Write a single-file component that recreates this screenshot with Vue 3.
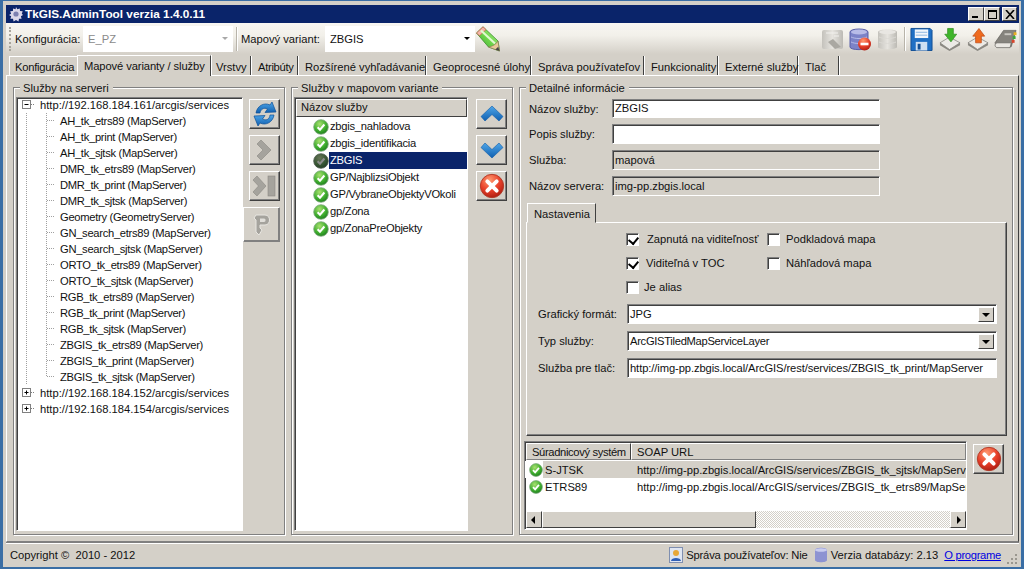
<script setup>
const tabs = [
  { t: 'Konfigurácia', w: 68 }, { t: 'Mapové varianty / služby', w: 134, active: true },
  { t: 'Vrstvy', w: 40 }, { t: 'Atribúty', w: 47 }, { t: 'Rozšírené vyhľadávanie', w: 128 },
  { t: 'Geoprocesné úlohy', w: 105 }, { t: 'Správa používateľov', w: 113 },
  { t: 'Funkcionality', w: 74 }, { t: 'Externé služby', w: 80 }, { t: 'Tlač', w: 41 },
]
const children = ['AH_tk_etrs89 (MapServer)','AH_tk_print (MapServer)','AH_tk_sjtsk (MapServer)','DMR_tk_etrs89 (MapServer)','DMR_tk_print (MapServer)','DMR_tk_sjtsk (MapServer)','Geometry (GeometryServer)','GN_search_etrs89 (MapServer)','GN_search_sjtsk (MapServer)','ORTO_tk_etrs89 (MapServer)','ORTO_tk_sjtsk (MapServer)','RGB_tk_etrs89 (MapServer)','RGB_tk_print (MapServer)','RGB_tk_sjtsk (MapServer)','ZBGIS_tk_etrs89 (MapServer)','ZBGIS_tk_print (MapServer)','ZBGIS_tk_sjtsk (MapServer)']
const services = ['zbgis_nahladova','zbgis_identifikacia','ZBGIS','GP/NajblizsiObjekt','GP/VybraneObjektyVOkoli','gp/Zona','gp/ZonaPreObjekty']
</script>

<template>
  <div class="window">
    <svg class="defs" width="0" height="0">
      <defs>
        <radialGradient id="gGreen" cx="40%" cy="30%" r="75%"><stop offset="0" stop-color="#a8e070"/><stop offset=".6" stop-color="#3fae2f"/><stop offset="1" stop-color="#1c7a1c"/></radialGradient>
        <radialGradient id="gRed" cx="40%" cy="25%" r="80%"><stop offset="0" stop-color="#ff9a70"/><stop offset=".55" stop-color="#e8402a"/><stop offset="1" stop-color="#a81a10"/></radialGradient>
        <linearGradient id="gBlue" x1="0" y1="0" x2="0" y2="1"><stop offset="0" stop-color="#4fa6e8"/><stop offset="1" stop-color="#0f5fb0"/></linearGradient>
        <linearGradient id="gGrey" x1="0" y1="0" x2="1" y2="0"><stop offset="0" stop-color="#c4c2bc"/><stop offset=".5" stop-color="#e6e4df"/><stop offset="1" stop-color="#bcbab4"/></linearGradient>
        <linearGradient id="gPen" x1="0" y1="1" x2="1" y2="0"><stop offset="0" stop-color="#2f9a2a"/><stop offset=".5" stop-color="#6fd64c"/><stop offset="1" stop-color="#b8f090"/></linearGradient>
        <symbol id="ok" viewBox="0 0 16 16"><circle cx="8" cy="8" r="7.300" fill="url(#gGreen)" stroke="#7fa87f" stroke-width=".8"/><path d="M4.600 8.200l2.400 2.500 4.400-5.200" fill="none" stroke="#fff" stroke-width="2"/></symbol>
        <symbol id="no" viewBox="0 0 30 30"><circle cx="15" cy="15" r="12.500" fill="url(#gRed)" stroke="#b03a28"/><path d="M10 10l10 10M20 10L10 20" stroke="#fff" stroke-width="4.200" stroke-linecap="round"/></symbol>
      </defs>
    </svg>

    <header class="title">
      <svg class="app-ic" width="16" height="16" viewBox="0 0 16 16"><path d="M8 1l1.300 2.300 2.500-.9.2 2.700 2.700.2-.9 2.500L15 9l-2.100 1.200.7 2.500-2.600.1-.5 2.600L8 14l-2.400 1.400-.6-2.600-2.600-.1.800-2.500L1 9l2.100-1.200-.9-2.500 2.700-.2.2-2.700 2.500.9z" fill="#dcd8ea"/><circle cx="8" cy="8" r="2.600" fill="#7d80b0"/></svg>
      <span class="title-text">TkGIS.AdminTool verzia 1.4.0.11</span>
      <div class="win-btns">
        <span class="wb"><i class="min"></i></span><span class="wb"><i class="max"></i></span><span class="wb close">
          <svg width="10" height="9" viewBox="0 0 10 9"><path d="M1 0l8 9M9 0L1 9" stroke="#000" stroke-width="1.600"/></svg></span>
      </div>
    </header>

    <div class="toolbar">
      <span class="grip"></span>
      <span class="tlabel l1">Konfigurácia:</span>
      <div class="tcombo disabled"><span>E_PZ</span><i class="caret grey"></i></div>
      <span class="tsep"></span>
      <span class="tlabel l2">Mapový variant:</span>
      <div class="tcombo"><span>ZBGIS</span><i class="caret"></i></div>
      <svg class="pencil" width="24" height="26" viewBox="0 0 24 26">
        <path d="M.5 7L7 .8 22 15l1.500 10-11-4z" fill="url(#gPen)" stroke="#3a8f2c" stroke-width=".8"/>
        <path d="M.5 7L7 .8l3 2.800-6.500 6.200z" fill="#f3b4a8" stroke="#c85040" stroke-width=".6"/>
        <path d="M5 4.500L19 17.500" stroke="#e0fad0" stroke-width="2.200"/>
        <path d="M22 15l1.500 10-11-4c4-.5 8-3 9.500-6z" fill="#e8c89a" stroke="#8a7350" stroke-width=".6"/><path d="M23.500 25l-4.200-1.500 3-2.800z" fill="#444"/>
      </svg>
      <div class="spacer"></div>
      <svg class="ti" width="21" height="26" viewBox="0 0 21 26"><rect y="4" width="21" height="19" rx="2" fill="url(#gGrey)"/><path d="M6 16l5-3 8 8-6 2z" fill="#aaa8a2"/><path d="M4 7h12M12 10h5" stroke="#f2f1ee"/></svg>
      <svg class="ti" width="22" height="26" viewBox="0 0 22 26"><path d="M1 6c0-4 18-4 18 0v15c0 3.500-18 3.500-18 0z" fill="#7c83c8" stroke="#5a60a8"/><ellipse cx="10" cy="6" rx="8" ry="2.600" fill="#b8bce8"/><path d="M2 11c4 2 12 2 16 0M2 16c4 2 12 2 16 0" stroke="#b8bce8" fill="none"/><circle cx="15.500" cy="18" r="6.500" fill="url(#gRed)"/><rect x="11.500" y="16.700" width="8" height="2.600" fill="#fff"/></svg>
      <svg class="ti" width="21" height="26" viewBox="0 0 21 26"><path d="M1 6c0-3.500 19-3.500 19 0v15c0 3-19 3-19 0z" fill="url(#gGrey)"/><ellipse cx="10.500" cy="6" rx="8.500" ry="2.200" fill="#e8e6e2"/><path d="M2 11c4 2 13 2 17 0M2 16c4 2 13 2 17 0" stroke="#dcdad5" fill="none"/></svg>
      <span class="tsep right"></span>
      <svg class="ti save" width="23" height="26" viewBox="0 0 24 26"><path d="M1 2h20l2 2v21H1z" fill="#1f6fc4" stroke="#134f94"/><rect x="5" y="3" width="14" height="9" fill="#f2f6fb"/><path d="M6 6h12M6 9h12" stroke="#8ab4e0"/><rect x="6" y="16" width="12" height="9" fill="#cfe0f2"/><rect x="8" y="18" width="3" height="6" fill="#134f94"/></svg>
      <svg class="ti" width="22" height="26" viewBox="0 0 23 26"><path d="M1 17l10-6 11 6-11 7z" fill="#eceae6" stroke="#77756f" stroke-width=".7"/><path d="M1 17v2.500l10 6 11-6V17l-11 7z" fill="#8b8983"/><path d="M9 2h6v6h3.500l-6 8-6.500-8H9z" fill="#3fb52a" stroke="#2a8a1c" stroke-width=".7"/></svg>
      <svg class="ti" width="22" height="26" viewBox="0 0 23 26"><path d="M1 17l10-6 11 6-11 7z" fill="#eceae6" stroke="#77756f" stroke-width=".7"/><path d="M1 17v2.500l10 6 11-6V17l-11 7z" fill="#8b8983"/><path d="M9 17h6v-7h3.500l-6-8L6 10h3z" fill="#ee6a1e" stroke="#b8430e" stroke-width=".7"/></svg>
      <svg class="ti last" width="23" height="26" viewBox="0 0 24 26"><path d="M1 17L10 4h13l-5 17H3z" fill="#85837d" stroke="#5c5a55" stroke-width=".7"/><path d="M3 22c-2.500-1-2.500-4 0-5h15l-1.200 5z" fill="#e9e7e2" stroke="#5c5a55" stroke-width=".7"/><path d="M11 8h7" stroke="#c8c6c0" stroke-width="2"/><rect x="20.500" y="6" width="3" height="3" fill="#e8b020"/><rect x="19.500" y="10" width="3" height="3" fill="#3aa838"/><rect x="18.500" y="14" width="3" height="3" fill="#d8452c"/></svg>
    </div>

    <nav class="tabs">
      <span v-for="tab in tabs" :key="tab.t" class="tab" :class="{ active: tab.active }" :style="{ width: tab.w + 'px' }">{{ tab.t }}</span>
    </nav>

    <main class="page">
      <section class="group g-left">
        <span class="legend">Služby na serveri</span>
        <div class="tree sunken">
          <div class="node root">
            <svg width="19" height="16" viewBox="0 0 19 16" class="tw"><rect x="2.500" y="3.500" width="8" height="8" fill="#fff" stroke="#808080"/><path d="M4.500 7.500h4" stroke="#000"/><path d="M11 7.500h4" stroke="#808080" stroke-dasharray="1 1"/></svg>
            <span>http://192.168.184.161/arcgis/services</span>
          </div>
          <div v-for="(c, i) in children" :key="c" class="node child">
            <svg width="40" height="16" viewBox="0 0 40 16" class="tw"><path d="M6.500 0v16" stroke="#a0a0a0" stroke-dasharray="1 1"/><path :d="i === children.length - 1 ? 'M26.500 0v8' : 'M26.500 0v16'" stroke="#a0a0a0" stroke-dasharray="1 1"/><path d="M27 7.500h8" stroke="#a0a0a0" stroke-dasharray="1 1"/></svg>
            <span>{{ c }}</span>
          </div>
          <div v-for="u in ['152', '154']" :key="u" class="node root">
            <svg width="19" height="16" viewBox="0 0 19 16" class="tw"><rect x="2.500" y="3.500" width="8" height="8" fill="#fff" stroke="#808080"/><path d="M4.500 7.500h4M6.500 5.500v4" stroke="#000"/><path d="M11 7.500h4" stroke="#808080" stroke-dasharray="1 1"/></svg>
            <span>http://192.168.184.{{ u }}/arcgis/services</span>
          </div>
        </div>
        <div class="side side-left">
          <button class="btn">
            <svg width="26" height="26" viewBox="0 0 26 26"><path d="M4 12C5 5 12 1 18 4l2-3 4 10-11 .5 2.500-3.500C12 6 8.500 8.500 8 12z" fill="url(#gBlue)" stroke="#0c4f96" stroke-width=".7"/><path d="M22 14c-1 7-8 11-14 8l-2 3-4-10 11-.5-2.500 3.500c3.500 2 7 .5 7.500-4z" fill="url(#gBlue)" stroke="#0c4f96" stroke-width=".7"/></svg>
          </button>
          <button class="btn"><svg width="22" height="24" viewBox="0 0 22 24"><path d="M7 2l10 10-10 10-4-4 6-6-6-6z" fill="#a5a39d" stroke="#8a8882" stroke-width=".6"/></svg></button>
          <button class="btn"><svg width="26" height="24" viewBox="0 0 26 24"><path d="M5 2l9 10-9 10-4-4 5.500-6L1 6z" fill="#a5a39d" stroke="#8a8882" stroke-width=".6"/><rect x="16" y="2" width="7" height="20" fill="#a5a39d" stroke="#8a8882" stroke-width=".6"/></svg></button>
          <button class="btn ghost"><svg width="24" height="26" viewBox="0 0 24 26"><path d="M6 3h9c6 0 6 10 0 10h-5v3l2 2-3 5-3-3V8L4 6z" fill="#a5a39d" stroke="#e8e6e1" stroke-width="1"/><path d="M10 6.500h4c2 0 2 3.500 0 3.500h-4z" fill="#e0ded9"/></svg></button>
        </div>
      </section>

      <section class="group g-mid">
        <span class="legend">Služby v mapovom variante</span>
        <div class="list sunken">
          <div class="lhead">Názov služby</div>
          <div class="lrows">
            <div v-for="s in services" :key="s" class="lrow" :class="{ sel: s === 'ZBGIS' }">
              <svg class="ok16" width="16" height="16"><use href="#ok" /></svg>
              <span class="ltext">{{ s }}</span>
            </div>
          </div>
        </div>
        <div class="side side-mid">
          <button class="btn"><svg width="24" height="20" viewBox="0 0 24 20"><path d="M12 2l11 10.500-4 4.500-7-6.500L5 17l-4-4.500z" fill="url(#gBlue)" stroke="#0d5aa8" stroke-width=".6"/></svg></button>
          <button class="btn"><svg width="24" height="20" viewBox="0 0 24 20"><path d="M12 18L1 7.500 5 3l7 6.500L19 3l4 4.500z" fill="url(#gBlue)" stroke="#0d5aa8" stroke-width=".6"/></svg></button>
          <button class="btn"><svg width="28" height="28"><use href="#no" /></svg></button>
        </div>
      </section>

      <section class="group g-right">
        <span class="legend">Detailné informácie</span>
        <div class="details">
          <div class="drow"><label>Názov služby:</label><div class="input sunken">ZBGIS</div></div>
          <div class="drow"><label>Popis služby:</label><div class="input sunken"></div></div>
          <div class="drow"><label>Služba:</label><div class="input sunken ro">mapová</div></div>
          <div class="drow"><label>Názov servera:</label><div class="input sunken ro">img-pp.zbgis.local</div></div>
        </div>

        <div class="subtab">Nastavenia</div>
        <div class="subpanel">
          <div class="checks">
            <div class="chk"><i class="box on"></i><span class="c1">Zapnutá na viditeľnosť</span></div>
            <div class="chk"><i class="box"></i><span>Podkladová mapa</span></div>
            <div class="chk"><i class="box on"></i><span class="c1 b">Viditeľná v TOC</span></div>
            <div class="chk"><i class="box"></i><span>Náhľadová mapa</span></div>
            <div class="chk"><i class="box"></i><span class="c1 c">Je alias</span></div>
          </div>
          <div class="frow"><label>Grafický formát:</label><div class="input sunken combo">JPG<span class="drop"></span></div></div>
          <div class="frow"><label>Typ služby:</label><div class="input sunken combo tight">ArcGISTiledMapServiceLayer<span class="drop"></span></div></div>
          <div class="frow"><label>Služba pre tlač:</label><div class="input sunken url">http://img-pp.zbgis.local/ArcGIS/rest/services/ZBGIS_tk_print/MapServer</div></div>
        </div>

        <div class="bottom">
          <div class="grid sunken">
            <div class="ghead"><span class="gh g1">Súradnicový systém</span><span class="gh g2">SOAP URL</span></div>
            <div class="grow selrow"><svg class="ok14" width="14" height="14"><use href="#ok" /></svg><span class="gc1">S-JTSK</span><span class="gc2">http://img-pp.zbgis.local/ArcGIS/services/ZBGIS_tk_sjtsk/MapServer</span></div>
            <div class="grow"><svg class="ok14" width="14" height="14"><use href="#ok" /></svg><span class="gc1">ETRS89</span><span class="gc2">http://img-pp.zbgis.local/ArcGIS/services/ZBGIS_tk_etrs89/MapServer</span></div>
            <div class="gfill"></div>
            <div class="hscroll">
              <span class="sb"><i class="al"></i></span>
              <span class="thumb"></span>
              <span class="track"></span>
              <span class="sb"><i class="ar"></i></span>
            </div>
          </div>
          <button class="btn del"><svg width="28" height="28"><use href="#no" /></svg></button>
        </div>
      </section>
    </main>

    <footer class="status">
      <span>Copyright ©&nbsp; 2010 - 2012</span>
      <div class="spacer"></div>
      <svg width="14" height="16" viewBox="0 0 14 16" class="st-ic"><rect x=".5" y=".5" width="13" height="15" fill="#dfe6f2" stroke="#7f8fb0"/><circle cx="7" cy="6" r="3" fill="#e8a838"/><path d="M2 14c0-4 10-4 10 0z" fill="#2f60b8"/></svg>
      <span class="st1">Správa používateľov: Nie</span>
      <svg width="14" height="16" viewBox="0 0 14 16" class="st-ic two"><path d="M1 3c0-3 12-3 12 0v10c0 3-12 3-12 0z" fill="#8d93d2"/><ellipse cx="7" cy="3" rx="6" ry="1.800" fill="#c9cdef"/></svg>
      <span class="st2">Verzia databázy: 2.13</span>
      <a class="link">O programe</a>
      <svg class="gripper" width="10" height="12" viewBox="0 0 10 12"><path d="M8 2h2v2H8zM4 6h2v2H4zM8 6h2v2H8zM0 10h2v2H0zM4 10h2v2H4zM8 10h2v2H8z" fill="#9a978f"/></svg>
    </footer>
  </div>
</template>

<style>
html, body { margin: 0; padding: 0; background: #d4d0c8; }
</style>

<style scoped>
* { box-sizing: border-box; }
.defs { position: absolute; }
.window {
  width: 1024px; height: 569px; overflow: hidden; display: flex; flex-direction: column;
  font: 11.2px/14px "Liberation Sans", Arial, sans-serif; color: #111;
  background: #d4d0c8; border: solid #3a6ea5; border-width: 1px 3px 2px 3px;
  box-shadow: inset 0 0 0 1px #d4d0c8; padding: 4px 2px 0 3px;
}
.title { height: 18px; background: #0a246a; color: #fff; display: flex; align-items: center; padding: 0 2px 0 2px; flex: none; }
.app-ic { margin-right: 1px; }
.title-text { font-weight: 700; font-size: 11.8px; }
.win-btns { margin-left: auto; display: flex; }
.wb { width: 16px; height: 14px; background: #d4d0c8; border: 1px solid; border-color: #fff #404040 #404040 #fff; position: relative; display: flex; align-items: center; justify-content: center; }
.wb.close { margin-left: 2px; width: 15px; }
.min { width: 6px; height: 2px; background: #000; margin-top: 6px; margin-right: 3px; }
.max { width: 9px; height: 9px; border: 1px solid #000; border-top-width: 2px; }

.toolbar { height: 31px; flex: none; display: flex; align-items: center; background: linear-gradient(#f8f6f2, #f2f0ea 40%, #d4d0c8); padding-left: 3px; }
.grip { width: 2px; height: 24px; border-left: 2px dotted #a8a59c; margin-right: 4px; }
.tlabel { white-space: nowrap; flex: none; }
.l1 { width: 68px; }
.l2 { width: 84px; }
.tcombo { background: #fff; height: 26px; display: flex; align-items: center; justify-content: space-between; padding: 0 5px; width: 150px; }
.disabled { color: #8a8a8a; }
.caret { width: 0; height: 0; border: 3px solid transparent; border-top: 3px solid #000; border-bottom: 0; }
.caret.grey { border-top-color: #a8a8a8; }
.tsep { width: 2px; height: 24px; background: #b8b4aa; border-right: 1px solid #fff; margin: 0 3px 0 3px; }
.pencil { margin-left: 1px; }
.spacer { flex: 1; }
.ti { margin-left: 6px; }
.tsep.right { margin: 0 4px 0 6px; }
.save { margin-left: 0; }
.ti.last { margin: 0 2px 0 5px; }

.tabs { height: 21px; flex: none; display: flex; align-items: flex-end; padding-left: 3px; position: relative; z-index: 1; }
.tab { height: 19px; display: flex; align-items: center; padding: 2px 0 0 7px; white-space: nowrap; border-right: 1px solid #404040; box-shadow: 1px 0 0 #fff; }
.tab:nth-child(3) { padding-left: 5px; }
.tab:nth-child(4) { letter-spacing: -.3px; }
.tab:first-child { border-left: 1px solid #fff; border-top: 1px solid #fff; border-right: 0; box-shadow: none; padding-left: 5px; letter-spacing: -.25px; }
.tab.active { height: 21px; background: #d4d0c8; border-left: 1px solid #fff; border-top: 1px solid #fff; align-items: flex-start; padding: 3px 0 0 6px; margin-bottom: -1px; letter-spacing: -.1px; }

.page { flex: 1; border: 1px solid; border-color: #fff #404040 #808080 #fff; display: grid; grid-template-columns: 272px 222px 494px; column-gap: 6px; padding: 11px 0 6px 6px; min-height: 0; }
.group { position: relative; border: 1px solid #808080; box-shadow: inset 1px 1px 0 #fff, 1px 1px 0 #fff; padding: 9px 4px 3px 3px; display: flex; min-height: 0; }
.legend { position: absolute; top: -7px; left: 6px; background: #d4d0c8; padding: 0 4px 0 3px; white-space: nowrap; }
.sunken { border: 1px solid; border-color: #808080 #fff #fff #808080; box-shadow: inset 1px 1px 0 #404040; background: #fff; }

.tree { width: 227px; height: 100%; padding: 0 0 0 1px; margin-left: -1px; }
.node { height: 16px; padding-bottom: 2px; display: flex; align-items: center; white-space: nowrap; }
.child span { letter-spacing: -.3px; }
.tw { flex: none; }
.root .tw { margin-left: 2px; margin-right: 1px; }
.child .tw { margin-left: 2px; }
.side { display: flex; flex-direction: column; gap: 6px; width: 30px; padding-top: 2px; }
.btn { padding: 0; width: 31px; height: 30px; background: #d4d0c8; border: 1px solid; border-color: #fff #404040 #404040 #fff; box-shadow: inset -1px -1px 0 #808080; display: flex; align-items: center; justify-content: center; flex: none; }
.side-left { margin-left: 6px; }
.side-left .ghost { margin-left: -6px; width: 37px; height: 35px; border-color: #fff #808080 #808080 #fff; }

.list { width: 174px; height: 100%; display: flex; flex-direction: column; margin-left: -1px; }
.lhead { height: 18px; margin: 1px 0 0 1px; background: #d4d0c8; border: 1px solid; border-color: #fff #404040 #404040 #fff; padding: 0 0 0 4px; flex: none; }
.lrows { padding: 1px 0 0 18px; }
.lrow { height: 17px; display: flex; align-items: center; }
.ok16 { flex: none; }
.ltext { flex: 1; height: 17px; line-height: 17px; padding-left: 1px; white-space: nowrap; letter-spacing: -.25px; }
.sel .ltext { background: #0a246a; color: #fff; }
.sel .ok16 { filter: brightness(.55) saturate(.5); }
.side-mid { margin-left: 8px; }

.g-right { flex-direction: column; padding: 9px 4px 3px 5px; }
.details { display: flex; flex-direction: column; gap: 6px; height: 106px; padding-top: 2px; }
.drow { display: flex; align-items: center; height: 20px; flex: none; }
.drow:first-child { height: 19px; }
.drow:first-child .input { height: 19px; padding-top: 1px; }
.drow label { width: 87px; padding-left: 4px; flex: none; white-space: nowrap; }
.drow .input { width: 268px; }
.input { height: 20px; padding: 2px 0 0 2px; white-space: nowrap; overflow: hidden; position: relative; }
.ro { background: #d4d0c8; }
.subtab { width: 69px; height: 20px; margin-left: 2px; border: 1px solid; border-color: #fff #404040 transparent #fff; padding: 3px 0 0 6px; flex: none; background: #d4d0c8; position: relative; z-index: 1; margin-bottom: -1px; }
.subpanel { width: 481px; height: 214px; flex: none; margin-left: 1px; border: 1px solid; border-color: #fff #404040 #404040 #fff; box-shadow: inset -1px -1px 0 #808080; padding: 9px 0 0 0; }
.checks { display: grid; grid-template-columns: 141px 1fr; grid-auto-rows: 24px; padding-left: 99px; height: 72px; }
.chk { display: flex; align-items: center; height: 14px; }
.box { width: 13px; height: 13px; flex: none; background: #fff; border: 1px solid; border-color: #808080 #fff #fff #808080; box-shadow: inset 1px 1px 0 #404040; position: relative; margin-right: 6px; }
.box.on::after { content: ""; position: absolute; left: 3px; top: 1px; width: 5px; height: 7px; border: solid #000; border-width: 0 2px 2px 0; transform: rotate(40deg); }
.c1 { margin-left: 2px; }
.c1.b { margin-left: 1px; }
.c1.c { margin-left: -1px; }
.frow { display: flex; align-items: center; height: 20px; margin-bottom: 7px; }
.frow label { width: 100px; padding-left: 11px; flex: none; white-space: nowrap; }
.frow .input { width: 370px; }
.tight { letter-spacing: -.3px; }
.url { letter-spacing: -.1px; }
.combo { padding-right: 18px; }
.drop { position: absolute; right: 2px; top: 2px; bottom: 1px; width: 16px; background: #d4d0c8; border: 1px solid; border-color: #fff #404040 #404040 #fff; }
.drop::after { content: ""; position: absolute; left: 3px; top: 5px; border: 4px solid transparent; border-top: 4px solid #000; border-bottom: 0; }

.bottom { display: flex; margin-top: 5px; flex: 1; min-height: 0; }
.grid { width: 443px; height: 89px; display: flex; flex-direction: column; overflow: hidden; margin-left: -1px; flex: none; }
.ghead { height: 17px; flex: none; display: flex; margin: 1px 0 0 1px; background: #d4d0c8; }
.gh { padding: 1px 0 0 5px; border: 1px solid; border-color: #fff #808080 #808080 #fff; height: 17px; white-space: nowrap; }
.g1 { width: 105px; border-right-color: #404040; flex: none; letter-spacing: -.35px; }
.g2 { flex: 1; }
.grow { height: 17px; display: flex; align-items: center; white-space: nowrap; flex: none; padding-left: 4px; overflow: hidden; }
.ghead + .grow { margin-top: 1px; }
.selrow { background: linear-gradient(90deg, #fff 18px, #d4d0c8 18px); }
.ok14 { flex: none; }
.gc1 { width: 94px; padding-left: 2px; flex: none; }
.gc2 { flex: none; }
.gfill { flex: 1; }
.hscroll { height: 17px; flex: none; display: flex; background: #fff; margin: 0 0 1px 1px; }
.sb { width: 16px; height: 17px; background: #d4d0c8; border: 1px solid; border-color: #fff #404040 #404040 #fff; flex: none; position: relative; }
.al, .ar { position: absolute; top: 4px; left: 4px; border: 4px solid transparent; }
.al { border-right: 4px solid #000; border-left: 0; }
.ar { border-left: 4px solid #000; border-right: 0; left: 6px; }
.thumb { width: 214px; background: #d4d0c8; border: 1px solid; border-color: #fff #404040 #404040 #fff; }
.track { flex: 1; background: repeating-conic-gradient(#d4d0c8 0 25%, #fff 0 50%) 0 0 / 2px 2px; }
.del { margin: 3px 0 0 6px; }

.status { height: 25px; flex: none; display: flex; align-items: center; padding: 0 2px 0 4px; border-top: 1px solid #808080; box-shadow: inset 0 1px 0 #fff; }
.st1 { letter-spacing: -.15px; }
.st-ic { margin-right: 3px; }
.st-ic.two { margin-left: 6px; }
.link { color: #0000e0; text-decoration: underline; margin-left: 6px; letter-spacing: -.3px; }
.gripper { align-self: flex-end; margin: 0 0 3px 6px; }
</style>
